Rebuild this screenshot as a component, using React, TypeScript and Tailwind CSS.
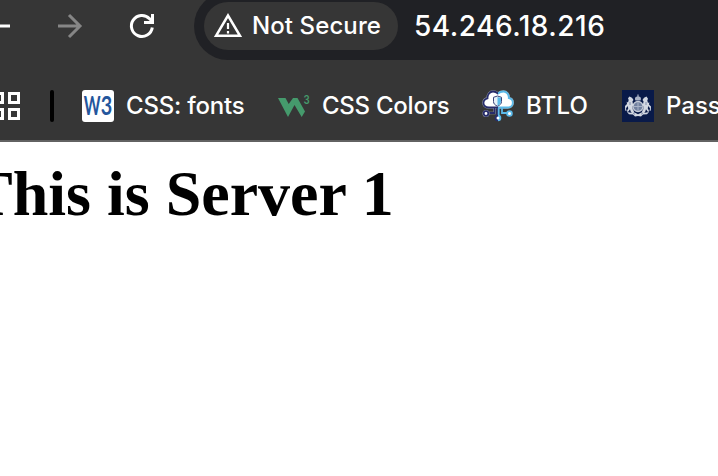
import type { ReactNode } from 'react';

function W3Icon() {
  return (
    <svg width="32" height="32" viewBox="0 0 32 32" className="shrink-0">
      <rect width="32" height="32" rx="3" fill="#fff" />
      <text x="1.800" y="25.200" fontSize="26" fontFamily="Lato, sans-serif" fontWeight="700" fill="#24569c" textLength="16.800" lengthAdjust="spacingAndGlyphs">W</text>
      <text x="18.700" y="25.200" fontSize="26" fontFamily="Lato, sans-serif" fontWeight="700" fill="#24569c" textLength="11.500" lengthAdjust="spacingAndGlyphs">3</text>
    </svg>
  );
}

function SchoolsIcon() {
  return (
    <svg width="32" height="32" viewBox="0 0 32 32" className="shrink-0">
      <path d="M0 8h7.500l3.200 6L15 8h4.500L27 21.500l-3.300 5.500L16.500 15l-6.500 12z" fill="#459a6c" />
      <text x="25.600" y="13.500" fontSize="12" fontWeight="600" fontFamily="Inter, sans-serif" fill="#459a6c" textLength="6.200" lengthAdjust="spacingAndGlyphs">3</text>
    </svg>
  );
}

function CloudIcon() {
  return (
    <svg width="32" height="32" viewBox="0 0 32 32" fill="none" className="shrink-0">
      <defs>
        <linearGradient id="cloud" x1="0" y1="0" x2="32" y2="0" gradientUnits="userSpaceOnUse">
          <stop offset="0.5" stopColor="#272c6b" />
          <stop offset="0.5" stopColor="#5bb9e8" />
        </linearGradient>
      </defs>
      <path d="M7 17.500C3 17.500 1.200 15 1.500 12.500 1.700 10 3.500 8.700 5.500 8.300 5.300 4.500 8 1.500 11 1.500c2 0 3.500.700 5 2 1.500-1.300 3.500-2 5.500-2 3 0 5.500 2.700 5.300 6.500 2.300.400 4 2.300 4 4.700 0 3-2.300 4.800-5 4.800z" fill="#fff" stroke="#99a0a8" strokeWidth="2.400" />
      <path d="M7 17.500C3 17.500 1.200 15 1.500 12.500 1.700 10 3.500 8.700 5.500 8.300 5.300 4.500 8 1.500 11 1.500c2 0 3.500.700 5 2 1.500-1.300 3.500-2 5.500-2 3 0 5.500 2.700 5.300 6.500 2.300.400 4 2.300 4 4.700 0 3-2.300 4.800-5 4.800z" fill="#fff" stroke="url(#cloud)" strokeWidth="1.800" />
      <path d="M15.500 6l4 1.300v4.200c0 2.200-1.500 3.700-4 4.700-2.500-1-4-2.500-4-4.700V7.300z" fill="#e8f1f8" stroke="#394479" strokeWidth="1" />
      <path d="M15.500 7l3.500 1v3.500c0 2-1.300 3.200-3.500 4.200z" fill="#5bb9e8" />
      <path d="M12.500 18v5H5" stroke="#99a0a8" strokeWidth="2.600" />
      <path d="M12.500 18v5H5" stroke="#272c6b" strokeWidth="1.800" />
      <path d="M15.300 18v8" stroke="#272c6b" strokeWidth="1.600" />
      <path d="M16.700 18v8M20 18v5h7" stroke="#5bb9e8" strokeWidth="1.800" />
      <circle cx="4" cy="23.500" r="3.500" fill="#99a0a8" />
      <circle cx="4" cy="23.500" r="2.300" fill="#fff" stroke="#272c6b" strokeWidth="1.800" />
      <circle cx="16" cy="28" r="2.400" fill="#fff" stroke="url(#cloud)" strokeWidth="1.800" />
      <circle cx="27.500" cy="23.500" r="2.400" fill="#fff" stroke="#5bb9e8" strokeWidth="1.800" />
    </svg>
  );
}

function CrestIcon() {
  return (
    <svg width="32" height="32" viewBox="0 0 32 32" fill="none" className="shrink-0">
      <rect width="32" height="32" fill="#091a49" />
      <circle cx="16" cy="16.500" r="5" fill="#71809f" stroke="#c3c9d6" strokeWidth="1.300" />
      <path d="M12 16.500h8M16 12.500v8" stroke="#a9b3c8" strokeWidth="1" />
      <path d="M13.500 10.500c-1.300-2.500 0-4 2.500-4.300 2.500.300 3.800 1.800 2.500 4.300zM15.400 4.500h1.200v2h-1.200z" fill="#aab3c7" />
      <g fill="#d3d8e2">
        <path d="M7.500 6.500l2.500 1.200L11.500 10l-1 1.200.300 2.300 1.200 1.200-1.500 1.500.200 3 1.300 2-.5 1.500-2.500-.500-1-3-2 2.800-1.200-.7 1.500-3-.800-2.300-1.500 2.500.500 2.500-1.300-.5L3 16l2-2-.300-2.200 1.300.700.700-2.500-.7-1.700z" />
        <path d="M24.500 6.500L22 7.700 20.500 10l1 1.200-.300 2.300-1.200 1.200 1.500 1.500-.200 3-1.300 2 .500 1.500 2.500-.500 1-3 2 2.800 1.200-.700-1.500-3 .800-2.300 1.500 2.500-.500 2.500 1.300-.500.200-4-2-2 .300-2.200-1.300.700-.700-2.500.700-1.700z" />
        <path d="M5 22l4 .800 2-1 5 2.400 5-2.400 2 1 4-.8-2 2.200-4 .300-2 2.100-3-.700-3 .700-2-2.100-4-.300z" />
      </g>
      <path d="M8 12v3M24 12v3M11 23l2 1.300M21 23l-2 1.300" stroke="#6c7b9e" strokeWidth="0.800" />
    </svg>
  );
}

function Bookmark({ icon, label, box, text }: { icon: ReactNode; label: string; box: string; text: string }) {
  return (
    <div className={`flex shrink-0 items-center gap-3 ${box}`}>
      {icon}
      <span className={`whitespace-nowrap text-[24px] leading-8 font-[450] text-white ${text}`}>{label}</span>
    </div>
  );
}

export default function App() {
  return (
    <div className="h-[476px] w-[718px] overflow-hidden bg-white font-['Inter',sans-serif]">
      <header className="h-[142px] border-b-2 border-[#626262] bg-[#363636]">
        <div className="flex h-[60px] overflow-hidden">
          <svg width="194" height="52" fill="none" strokeWidth="3" className="shrink-0">
            <path d="M-10 26H10" stroke="#fff" />
            <path d="M58 26h22M69 15l11 11-11 11" stroke="#868686" />
            <path d="M152.300 27.500A10.500 10.500 0 1 1 149.500 18.700L153 22" stroke="#fff" />
            <path d="M152.500 14v8.500H144" stroke="#fff" />
          </svg>
          <div className="-mt-2 flex h-[68px] grow items-center rounded-l-full bg-[#202125] pl-2.5">
            <div className="flex h-12 w-[194px] shrink-0 items-center rounded-full bg-[#363636] pl-2.5">
              <svg width="28" height="28" fill="none" className="shrink-0">
                <path d="M2 23.800L14 3.500l12 20.300z" stroke="#fff" strokeWidth="2.500" />
                <path d="M14 11v6M14 19v2.500" stroke="#fff" strokeWidth="2.200" />
              </svg>
              <span className="ml-2.5 whitespace-nowrap text-[24px] leading-8 font-medium tracking-[0.1px] text-white">Not Secure</span>
            </div>
            <span className="ml-4 whitespace-nowrap text-[28px] leading-8 font-[450] tracking-[0.5px] text-white">54.246.18.216</span>
          </div>
        </div>
        <div className="mt-[22px] flex h-12 items-center overflow-hidden">
          <svg width="20" height="28" fill="none" stroke="#fff" strokeWidth="3" className="shrink-0">
            <path d="M-6.500 1.500h9v9h-9zM9.500 1.500h9v9h-9zM-6.500 17.500h9v9h-9zM9.500 17.500h9v9h-9z" />
          </svg>
          <div className="mr-7 ml-[30px] h-8 w-1 shrink-0 rounded-full bg-black" />
          <Bookmark icon={<W3Icon />} label="CSS: fonts" box="w-[196px]" text="tracking-[-0.2px]" />
          <Bookmark icon={<SchoolsIcon />} label="CSS Colors" box="w-[204px]" text="tracking-[-0.25px]" />
          <Bookmark icon={<CloudIcon />} label="BTLO" box="w-[140px]" text="tracking-[0.2px]" />
          <Bookmark icon={<CrestIcon />} label="Passport" box="w-[200px]" text="" />
        </div>
      </header>
      <main className="pt-[15px]">
        <h1 className="-ml-[30px] whitespace-nowrap font-['Liberation_Serif',serif] text-[64px] leading-[74px] font-bold text-black">This is Server 1</h1>
      </main>
    </div>
  );
}
